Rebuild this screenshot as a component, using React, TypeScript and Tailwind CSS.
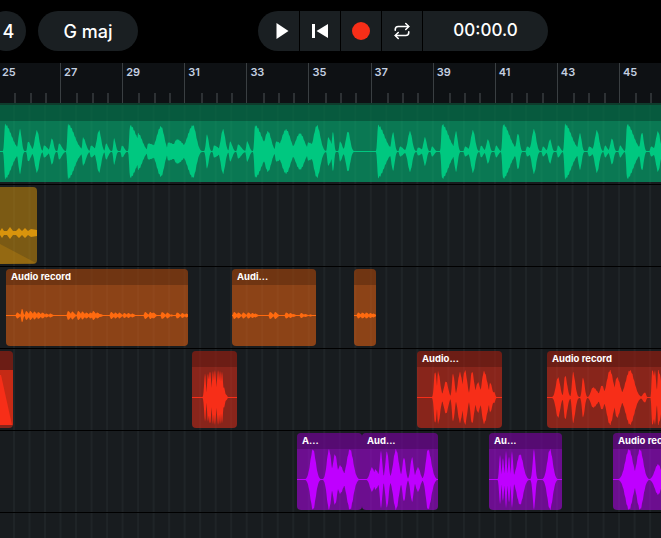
import { Repeat } from 'lucide-react';

// ── Types ─────────────────────────────────────────────────────────────────────

// page x of a peak, half height, decay to the right, rise from the left
type Peak = [number, number, number?, number?];

interface Clip {
  left:   number;
  width:  number;
  title?: string;
  peaks:  Peak[];
}

// ── Data ──────────────────────────────────────────────────────────────────────

const BARS = [25, 27, 29, 31, 33, 35, 37, 39, 41, 43, 45];

const GREEN: Peak[] = [
  [5, 27, 6], [20, 22, 1.5, 1.5], [28, 10, 2.5], [37, 21, 2, 2], [44, 6, 3], [52, 13, 1.5, 1.5], [59, 8, 2.5],
  [68, 27, 6], [83, 14, 2.5], [91, 6, 3], [99, 21, 2, 2], [106, 8, 2], [114, 13, 1.5], [122, 6, 2],
  [130, 26, 6], [138, 18, 4], [148, 8, 8], [161, 25, 3, 4], [168, 9, 8], [177, 12, 6, 3], [193, 26, 3, 5],
  [207, 17, 1.5, 1], [214, 6, 4], [223, 22, 2, 2], [230, 10, 2], [238, 7, 3], [247, 10, 2], [255, 26, 6],
  [268, 20, 3, 3], [276, 10, 6], [286, 22, 4, 4], [300, 18, 4, 4], [308, 9, 6], [317, 26, 3, 3], [328, 14, 3],
  [333, 20, 1, 1], [340, 10, 2], [348, 20, 2, 2],
  [378, 26, 6], [393, 19, 1.5, 1.5], [400, 5, 3], [410, 20, 2, 2], [418, 4, 3], [425, 14, 1.5, 1.5], [432, 5, 2],
  [442, 27, 6], [456, 20, 1.5, 1.5], [465, 5, 3], [473, 21, 2, 2], [481, 6, 2], [488, 12, 1.5, 1.5], [496, 6, 2],
  [503, 27, 6], [518, 18, 1.5, 1.5], [527, 5, 3], [534, 22, 2, 2], [543, 5, 2], [550, 12, 1.5, 1.5], [558, 6, 2],
  [565, 27, 6], [580, 18, 1.5, 1.5], [589, 5, 3], [597, 21, 2, 2], [605, 6, 2], [612, 13, 1.5, 1.5], [620, 6, 2],
  [627, 27, 6], [642, 19, 1.5, 1.5], [651, 5, 3], [658, 20, 2, 2],
];

const ORANGE: Clip[] = [
  {
    left: 6, width: 182, title: 'Audio record',
    peaks: [
      [17, 3], [22, 7, 1], [26, 4.5], [30, 4.5], [34, 4], [38, 3.5], [42, 3], [46, 2], [50, 2], [68, 4.5], [72, 4],
      [78, 4.5], [82, 4], [86, 3], [90, 3], [93, 4.5], [97, 3], [100, 1.5], [111, 3.5], [115, 3], [119, 3], [124, 2.5],
      [128, 2.5], [132, 2], [145, 3.5], [150, 3.5], [153, 3], [162, 3.5], [167, 3], [171, 1], [177, 3], [182, 2.5], [186, 2],
    ],
  },
  {
    left: 232, width: 84, title: 'Audi...',
    peaks: [
      [234, 3.5], [238, 3], [243, 3], [248, 3], [252, 2.5], [255, 2], [270, 3.5], [275, 3.5],
      [286, 3], [290, 2.5], [293, 1.5], [301, 2.5], [305, 1.5], [310, 1],
    ],
  },
  {
    left: 354, width: 22,
    peaks: [[358, 3], [362, 3], [366, 3], [370, 2.5], [373, 2]],
  },
];

const RED: Clip[] = [
  {
    left: 192, width: 45,
    peaks: [
      [205, 24, 0.8, 0.8], [208, 25, 0.8, 0.8], [210, 27, 1, 1], [213, 26, 1, 1], [215, 27, 1, 1],
      [218, 27, 1, 1], [220, 26, 1, 1], [222, 25, 1, 1], [224, 10, 1], [226, 3, 1],
    ],
  },
  {
    left: 417, width: 85, title: 'Audio...',
    peaks: [
      [435, 26, 1.5, 1], [438, 26, 2], [446, 16, 2, 2], [453, 24, 1.5, 1], [460, 25, 2, 2], [465, 27, 2, 2],
      [472, 26, 2, 1.5], [478, 15, 2, 2], [484, 26, 3, 2], [490, 15, 2], [494, 6, 1],
    ],
  },
  {
    left: 547, width: 200, title: 'Audio record',
    peaks: [
      [558, 20, 2, 2], [565, 22, 2, 1], [573, 25, 2, 1], [583, 20, 1.5, 1], [593, 10, 4, 2], [602, 12, 2, 2],
      [610, 27, 3, 3], [617, 20, 3, 2], [630, 27, 4, 4], [645, 5, 1, 2], [652, 27, 3, 0.5], [655, 27, 1, 1], [658, 27, 3, 0.5],
    ],
  },
];

const PURPLE: Clip[] = [
  {
    left: 297, width: 65, title: 'A...',
    peaks: [[313, 30, 2.5, 2.5], [329, 30, 2, 2], [335, 25, 2, 2], [340, 14, 3, 2], [350, 30, 3, 3]],
  },
  {
    left: 362, width: 76, title: 'Aud...',
    peaks: [
      [372, 12, 2, 2], [375, 10, 3], [381, 28, 1.2, 1.2], [387, 28, 1.5, 1.5], [396, 30, 2.5, 2.5],
      [404, 22, 1.5, 1.5], [412, 22, 1.5, 1.5], [418, 12, 2, 2], [428, 30, 3, 2],
    ],
  },
  {
    left: 489, width: 73, title: 'Au...',
    peaks: [[500, 25, 0.8, 0.8], [503, 22, 0.8, 0.8], [506, 28, 0.8, 0.8], [509, 24, 0.8, 0.8], [512, 28, 1, 0.8], [520, 25, 3, 3], [534, 30, 1.2, 1.2], [550, 30, 2.5, 2.5]],
  },
  {
    left: 613, width: 100, title: 'Audio record',
    peaks: [[629, 30, 3.5, 3.5], [640, 30, 3, 3], [658, 15, 3, 3]],
  },
];

// ── Helpers ───────────────────────────────────────────────────────────────────

function wavePath(peaks: Peak[], left: number, width: number, height: number): string {
  const mid = height / 2;
  const amps: number[] = [];
  for (let i = 0; i <= width * 2; i++) {
    const x = left + i / 2;
    let amp = 0.5;
    for (const [px, a, tau = 2, rise = 0.7] of peaks) {
      const d = x - px;
      amp = Math.max(amp, a * Math.exp(-Math.pow(Math.abs(d) / (1.5 * (d >= 0 ? tau : rise)), 2)));
    }
    // small wobble so the edge is not a clean curve
    const wobble = amp > 2 ? 1 + 0.04 * Math.sin(i * 1.7) : 1;
    amps.push(Math.min(amp * wobble, mid));
  }
  const top = amps.map((a, i) => `${i / 2},${(mid - a).toFixed(1)}`);
  const bottom = amps.map((a, i) => `${i / 2},${(mid + a).toFixed(1)}`).reverse();
  return `M${top.join('L')}L${bottom.join('L')}Z`;
}

// ── Components ────────────────────────────────────────────────────────────────

function Wave({ clip, height, fill }: { clip: Clip; height: number; fill: string }) {
  return (
    <svg width={clip.width} height={height} viewBox={`0 0 ${clip.width} ${height}`} className="block">
      <path d={wavePath(clip.peaks, clip.left, clip.width, height)} fill={fill} />
    </svg>
  );
}

function ClipBox({ clip, bodyClass, fill }: { clip: Clip; bodyClass: string; fill: string }) {
  return (
    <div
      className={`absolute top-[2px] h-[77px] rounded-[4px] overflow-hidden flex flex-col ${bodyClass}`}
      style={{ left: clip.left, width: clip.width }}
    >
      <div className="h-[16px] shrink-0 bg-black/20 pl-[5px] text-[9.5px] leading-[15px] font-bold text-white whitespace-nowrap">
        {clip.title}
      </div>
      <Wave clip={clip} height={61} fill={fill} />
    </div>
  );
}

function Track({ children, last }: { children?: React.ReactNode; last?: boolean }) {
  return (
    <div
      className={`relative shrink-0 h-[82px] ${last ? '' : 'border-b border-black'} bg-[#181c1f] bg-[linear-gradient(90deg,#1f2427_1.5px,transparent_1.5px)] bg-[length:15.525px_100%] bg-[position:13px_0]`}
    >
      {children}
    </div>
  );
}

function Ruler() {
  return (
    <div className="h-[40px] shrink-0 flex bg-[#0e1114] -ml-[2px] w-[700px]">
      {BARS.map(bar => (
        <div key={bar} className="w-[62.1px] shrink-0 flex flex-col justify-between border-l border-[#3a3f42]">
          <span className="pl-[3px] pt-[2px] text-[11px] leading-[14px] font-semibold text-[#c3cfe0]">{bar}</span>
          <div className="flex h-[10px]">
            {[0, 1, 2, 3].map(beat => (
              <div key={beat} className="w-1/4 h-full">
                {beat > 0 && <div className="w-[2px] h-full bg-[#2d3134]" />}
              </div>
            ))}
          </div>
        </div>
      ))}
    </div>
  );
}

function Transport() {
  return (
    <div className="flex h-[40px] w-[290px] ml-[120px] gap-px rounded-[20px] overflow-hidden">
      <button className="w-[41px] bg-[#1a1f22] flex items-center justify-center pl-[7px]">
        <svg width="13" height="16" viewBox="0 0 13 16"><path d="M0.5 0 L12.5 8 L0.5 16 Z" fill="#fff" /></svg>
      </button>
      <button className="w-[40px] bg-[#1a1f22] flex items-center justify-center">
        <svg width="16" height="14" viewBox="0 0 16 14">
          <rect x="0" y="0" width="3" height="14" fill="#fff" />
          <path d="M16 0 L16 14 L4.5 7 Z" fill="#fff" />
        </svg>
      </button>
      <button className="w-[40px] bg-[#1a1f22] flex items-center justify-center">
        <span className="w-[18px] h-[18px] rounded-full bg-[#f72e18]" />
      </button>
      <button className="w-[40px] bg-[#1a1f22] flex items-center justify-center">
        <Repeat size={18} strokeWidth={2.1} color="#fff" />
      </button>
      <div className="flex-1 bg-[#1a1f22] flex items-center justify-center text-[17px] font-medium text-white">
        00:00.0
      </div>
    </div>
  );
}

// ── Page ──────────────────────────────────────────────────────────────────────

export default function App() {
  const greenClip: Clip = { left: -10, width: 690, peaks: GREEN };

  return (
    <div className="w-[661px] h-[538px] overflow-hidden bg-black flex flex-col font-['Inter',sans-serif]">
      {/* Top bar */}
      <div className="h-[63px] shrink-0 flex items-center pb-[1px] text-white">
        <div className="w-[40px] h-[40px] -ml-[14px] rounded-full bg-[#1a1f22] flex items-center justify-center pl-[5px] text-[18px] font-medium">
          4
        </div>
        <div className="w-[100px] h-[40px] ml-[12px] rounded-full bg-[#1a1f22] flex items-center justify-center text-[18px] font-medium">
          G maj
        </div>
        <Transport />
      </div>

      <Ruler />

      {/* Tracks */}
      <Track>
        <div className="absolute left-[-10px] top-[2px] w-[690px] h-[77px] flex flex-col bg-[#00c47d]/55 shadow-[0_-2px_0_#0e3d2d]">
          <div className="h-[16px] shrink-0 bg-black/25" />
          <Wave clip={greenClip} height={61} fill="#00c880" />
        </div>
      </Track>

      <Track>
        <div className="absolute left-[-10px] top-[2px] w-[47px] h-[77px] rounded-[4px] overflow-hidden bg-[#de980a]/50">
          <svg width="47" height="77" viewBox="0 0 47 77" className="block">
            <path d="M10 57 L46 76 L10 77 Z" fill="#de980a" fillOpacity="0.25" />
            <path
              d="M10 44 L12 41 L14 44 L17 44 L20 40 L23 44 L26 44 L29 41 L32 44 L35 41 L38 44 L41 42 L47 43 L47 49 L41 50 L38 48 L35 51 L32 48 L29 51 L26 48 L23 48 L20 52 L17 48 L14 48 L12 51 L10 48 Z"
              fill="#d9940c"
            />
          </svg>
        </div>
      </Track>

      <Track>
        {ORANGE.map(clip => (
          <ClipBox key={clip.left} clip={clip} bodyClass="bg-[#ff6a0f]/50" fill="#ff6a0f" />
        ))}
      </Track>

      <Track>
        <div className="absolute left-[-10px] top-[2px] w-[23px] h-[77px] rounded-[4px] overflow-hidden flex flex-col bg-[#f72e18]/50">
          <div className="h-[19px] shrink-0 bg-black/20" />
          <svg width="23" height="58" viewBox="0 0 23 58" className="block">
            <rect x="10" y="0" width="13" height="55" fill="#c52a15" />
            <path d="M10 5 L11 5 L22 55 L11 55 L10 55 Z" fill="#f72e18" />
          </svg>
        </div>
        {RED.map(clip => (
          <ClipBox key={clip.left} clip={clip} bodyClass="bg-[#f72e18]/50" fill="#f72e18" />
        ))}
      </Track>

      <Track>
        {PURPLE.map(clip => (
          <ClipBox key={clip.left} clip={clip} bodyClass="bg-[#bf00ff]/50" fill="#bf00ff" />
        ))}
      </Track>

      <Track last />
    </div>
  );
}
